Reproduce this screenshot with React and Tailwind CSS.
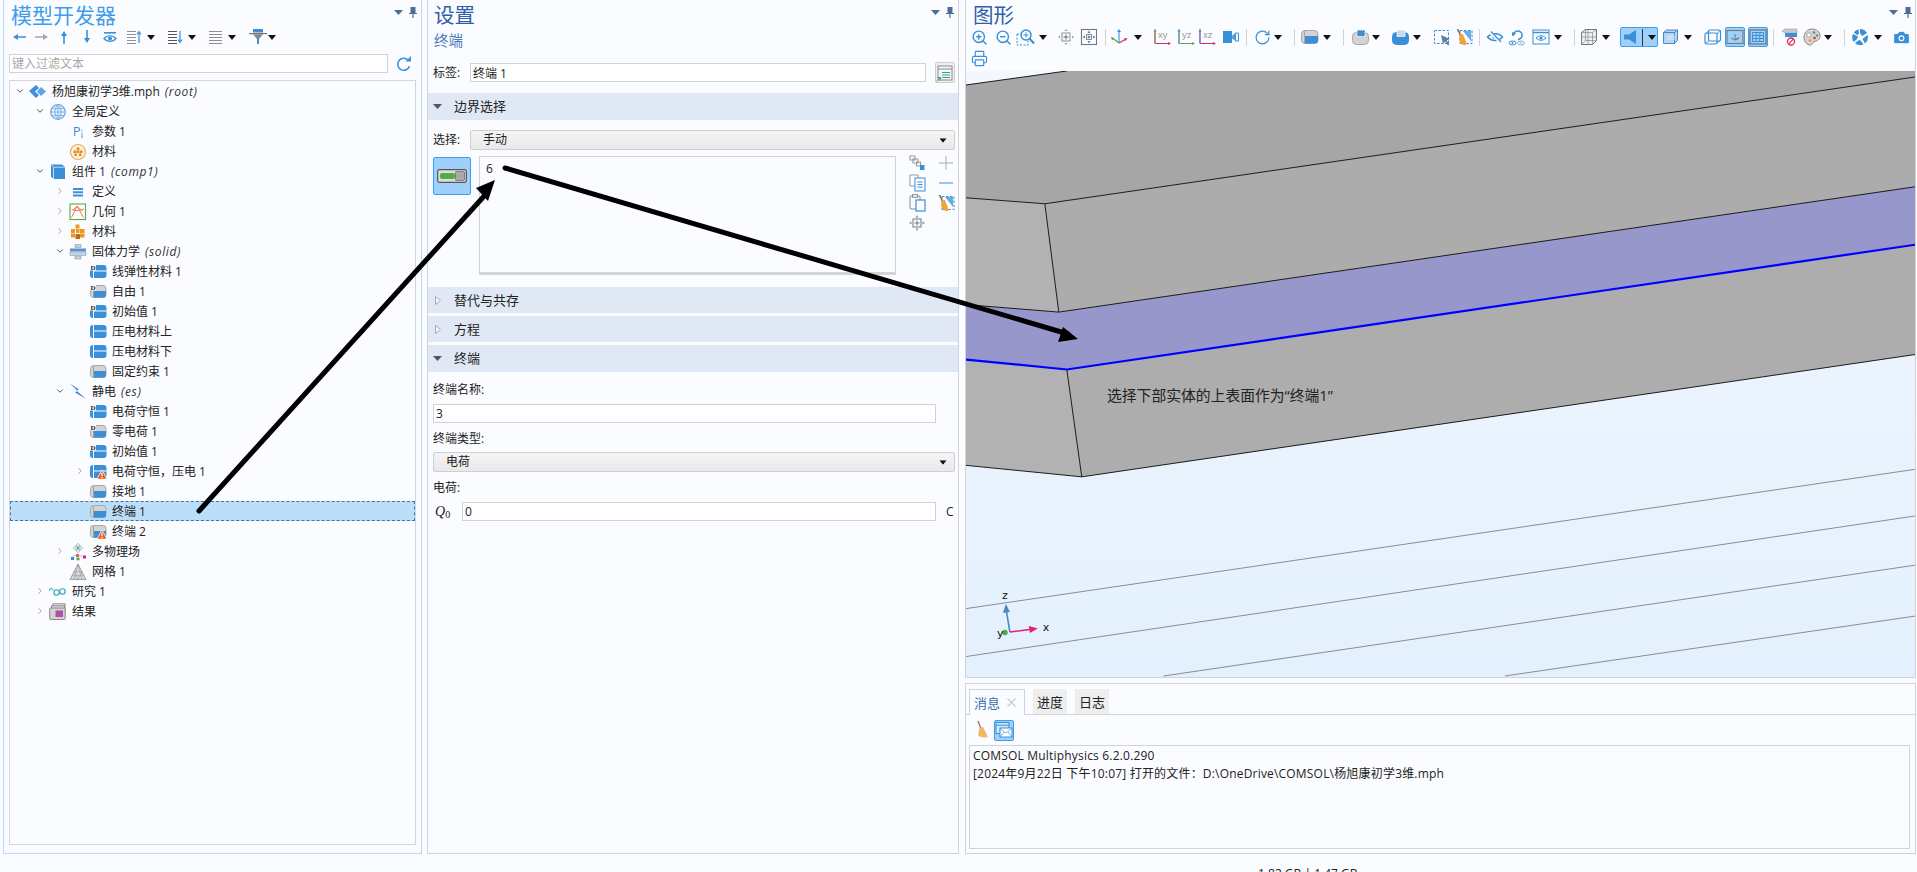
import { ZoomIn, ZoomOut, Printer, Camera, RotateCw, ChevronDown, ChevronRight } from "lucide-react";

const BL = "#3b8fd6";
const GR = "#8f8f8f";

// ---------- small helpers ----------
function T({ className = "", children }) {
  return <span className={"flex h-5 w-5 shrink-0 items-center justify-center " + className}>{children}</span>;
}

function Caret({ className = "" }) {
  return (
    <svg width="8" height="5" viewBox="0 0 8 5" className={"shrink-0 " + className}>
      <path d="M0 0H8L4 5Z" fill="#111" />
    </svg>
  );
}

function Sep({ className = "" }) {
  return <span className={"h-[17px] w-px shrink-0 bg-[#d0d4da] " + className} />;
}

function S({ children, w = 18, h = 18, vb = "0 0 18 18" }) {
  return (
    <svg width={w} height={h} viewBox={vb} fill="none">
      {children}
    </svg>
  );
}

function PanelPin() {
  return (
    <div className="absolute right-[4px] top-[7px] flex items-center gap-[6px]">
      <svg width="9" height="5" viewBox="0 0 9 5"><path d="M0 0H9L4.5 5Z" fill="#4a6f96" /></svg>
      <svg width="8" height="11" viewBox="0 0 8 11"><path d="M1.5 0H6.5V6H8V7H4.6V11H3.4V7H0V6H1.5Z" fill="#4a6f96" /></svg>
    </div>
  );
}

// ---------- tree icons ----------
const Warn = () => (
  <g>
    <path d="M7 15.2L12 5.8L17 15.2Z" fill="#f4581c" stroke="#fbfcff" strokeWidth="0.8" />
    <path d="M12 8.8V12M12 12.8V14" stroke="#fff" strokeWidth="1.2" />
  </g>
);

function Node({ kind = "bnd", d = false, warn = false }) {
  return (
    <svg width="17" height="15" viewBox="0 0 17 15" fill="none">
      {kind === "bnd" ? (
        <g>
          <rect x="0.5" y="1.5" width="15.5" height="12" rx="3" fill="#d3d3d3" stroke="#a8a8a8" />
          <path d="M3.5 7H16V11.5Q16 13.5 14 13.5H3.5Z" fill={BL} />
          <path d="M3.5 2V13" stroke="#a0a0a0" />
        </g>
      ) : (
        <g>
          <rect x="0" y="1" width="16.5" height="13" rx="3" fill={BL} />
          <path d="M3.5 1V14M3.5 7H16.5" stroke="#fff" strokeWidth="1" />
        </g>
      )}
      {d && (
        <g>
          <rect x="0" y="0" width="6" height="6.5" fill="#fbfcff" />
          <text x="0.5" y="6" fontSize="7" fontWeight="700" fontFamily="Liberation Serif" fill="#222">D</text>
        </g>
      )}
      {warn && <Warn />}
    </svg>
  );
}

const RootIcon = () => (
  <S>
    <path d="M0 8L7 2L10 5L6 8.5L10 12L7 15Z" fill="#3f8fd9" />
    <path d="M8 8.5L12 4L17 8.5L12 13Z" fill="#5aa6e8" />
  </S>
);
const Globe = () => (
  <S>
    <circle cx="9" cy="9" r="7.3" fill="#e3effa" stroke="#6fa9de" strokeWidth="1.2" />
    <path d="M1.7 9H16.3M2.8 5.4H15.2M2.8 12.6H15.2M9 1.7V16.3M9 1.7C5 5 5 13 9 16.3M9 1.7C13 5 13 13 9 16.3" stroke="#6fa9de" strokeWidth="0.8" />
  </S>
);
const Params = () => (
  <span className="text-[13px] leading-none text-[#3b8fd6]">
    P<span className="text-[10px]">¡</span>
  </span>
);
const MatRing = () => (
  <S>
    <circle cx="9" cy="9" r="7.5" fill="#fdf1e0" stroke="#eda848" strokeWidth="1.1" />
    <path d="M7.6 4.5h2.8v2.4H7.6zM4.5 7.4h2.6v2.6H4.5zM7.6 7.4h2.8v2.6H7.6zM10.9 7.4h2.6v2.6h-2.6zM5.5 10.5h2.4v2.4H5.5zM10 10.5h2.4v2.4H10z" fill="#dc8a25" />
  </S>
);
const Cube = () => (
  <S>
    <path d="M2 1.5H13L16 4V16H4.5L2 13.5Z" fill={BL} />
    <path d="M2 1.5L4.5 4.2H16M4.5 4.2V16" stroke="#bcdcf6" strokeWidth="1" />
  </S>
);
const Defs = () => (
  <S>
    <path d="M4 5h10v2H4zM4 8.2h10v2H4zM4 11.4h10v2H4z" fill={BL} />
  </S>
);
const Geom = () => (
  <S>
    <rect x="1" y="1" width="15.5" height="15.5" fill="#fff" stroke="#5aa845" strokeWidth="1.1" />
    <path d="M2.5 14.5L8 3L14.5 14.5M4 7L8 3L13.5 8M2.5 6.5C6 8 10 8 15 6" stroke="#ec6a4a" strokeWidth="0.9" />
  </S>
);
const Mat = () => (
  <S>
    <path d="M6.5 1.5h4v4h-4zM2 6h4v4H2zM7 6h3.5v4H7zM11 6h4.5v4H11zM2 10.5h4v4H2zM11 10.5h4.5v4H11z" fill="#f0951e" />
    <path d="M6.5 11h4.5v5H6.5z" fill="#b8691a" />
  </S>
);
const Solid = () => (
  <S>
    <path d="M6 1.5h6v3H6zM6 13h6v3H6z" fill="#c4d3e2" stroke="#8ba7c0" strokeWidth="0.7" />
    <path d="M1 5.5h16v3H1z" fill="#5c93cb" />
    <path d="M1 9h16v3.4H1z" fill="#c8d6e3" stroke="#8ba7c0" strokeWidth="0.7" />
  </S>
);
const Bolt = () => (
  <S>
    <path d="M1 0.5L10 6.5L7.5 7.5L17 16L6 9.5L8.5 8Z" fill="#4a90d5" />
  </S>
);
const Multi = () => (
  <S>
    <ellipse cx="9" cy="5" rx="4.5" ry="2" stroke="#7fb38a" strokeWidth="0.7" />
    <ellipse cx="9" cy="5" rx="2" ry="4.5" stroke="#7fa9c9" strokeWidth="0.7" />
    <circle cx="9" cy="5" r="1.2" fill="#6a9f7a" />
    <path d="M2 14h3v3H2z" fill="#3b8fd6" />
    <path d="M7 11h3v3H7z" fill="#e66060" />
    <path d="M7.5 14.5h3v2.8h-3z" fill="#5aa845" />
    <path d="M14 12.5h3v3h-3z" fill="#d91e8c" />
    <path d="M3.5 14L8.5 11M10 12.5L14.5 13.5" stroke="#999" strokeWidth="0.6" />
  </S>
);
const Mesh = () => (
  <S>
    <path d="M9 1L17 16.5H1Z" fill="#d8d8d8" stroke="#989898" strokeWidth="0.9" />
    <path d="M5 8.7H13M3 12.7H15M9 1L5 16.5M9 1L13 16.5M5 8.7L9 16.5L13 8.7" stroke="#989898" strokeWidth="0.6" />
  </S>
);
const Study = () => (
  <S>
    <path d="M0 8C1.5 4.5 3 5 4 7" stroke="#2ba4b5" strokeWidth="1.1" />
    <circle cx="7.5" cy="9.5" r="2.7" stroke="#2ba4b5" strokeWidth="1.1" />
    <circle cx="13.5" cy="8.5" r="2.7" stroke="#2ba4b5" strokeWidth="1.1" />
  </S>
);
const Results = () => (
  <S>
    <rect x="4" y="0.8" width="12" height="11" fill="#eee" stroke="#8a8a8a" />
    <rect x="2.5" y="2.8" width="13" height="11" fill="#e0e0e0" stroke="#8a8a8a" />
    <rect x="0.7" y="5" width="15.5" height="11.5" rx="1" fill="#d4d4d4" stroke="#8a8a8a" />
    <rect x="6.5" y="7.5" width="7.5" height="6.5" fill="#b050a0" />
  </S>
);

const rows = [
  { l: 0, open: true, icon: <RootIcon />, t: "杨旭康初学3维.mph", it: "(root)" },
  { l: 1, open: true, icon: <Globe />, t: "全局定义" },
  { l: 2, icon: <Params />, t: "参数 1" },
  { l: 2, icon: <MatRing />, t: "材料" },
  { l: 1, open: true, icon: <Cube />, t: "组件 1", it: "(comp1)" },
  { l: 2, closed: true, icon: <Defs />, t: "定义" },
  { l: 2, closed: true, icon: <Geom />, t: "几何 1" },
  { l: 2, closed: true, icon: <Mat />, t: "材料" },
  { l: 2, open: true, icon: <Solid />, t: "固体力学", it: "(solid)" },
  { l: 3, icon: <Node kind="dom" d />, t: "线弹性材料 1" },
  { l: 3, icon: <Node d />, t: "自由 1" },
  { l: 3, icon: <Node kind="dom" d />, t: "初始值 1" },
  { l: 3, icon: <Node kind="dom" />, t: "压电材料上" },
  { l: 3, icon: <Node kind="dom" />, t: "压电材料下" },
  { l: 3, icon: <Node />, t: "固定约束 1" },
  { l: 2, open: true, icon: <Bolt />, t: "静电", it: "(es)" },
  { l: 3, icon: <Node kind="dom" d />, t: "电荷守恒 1" },
  { l: 3, icon: <Node d />, t: "零电荷 1" },
  { l: 3, icon: <Node kind="dom" d />, t: "初始值 1" },
  { l: 3, closed: true, icon: <Node kind="dom" warn />, t: "电荷守恒，压电 1" },
  { l: 3, icon: <Node />, t: "接地 1" },
  { l: 3, sel: true, icon: <Node />, t: "终端 1" },
  { l: 3, icon: <Node warn />, t: "终端 2" },
  { l: 2, closed: true, icon: <Multi />, t: "多物理场" },
  { l: 2, icon: <Mesh />, t: "网格 1" },
  { l: 1, closed: true, icon: <Study />, t: "研究 1" },
  { l: 1, closed: true, icon: <Results />, t: "结果" },
];
const indent = ["pl-[4px]", "pl-[24px]", "pl-[44px]", "pl-[64px]"];

function TreeRow({ r }) {
  return (
    <div
      className={
        "flex h-[20px] items-center border border-transparent whitespace-nowrap " +
        indent[r.l] +
        (r.sel ? " border-dashed !border-[#47749f] bg-[#bbdefb]" : "")
      }
    >
      <span className="flex w-[10px] justify-center text-[#333]">
        {r.open && <ChevronDown size={14} strokeWidth={2} />}
        {r.closed && <ChevronRight size={14} strokeWidth={1.4} className="text-[#666]" />}
      </span>
      <span className="ml-[3px] mt-[1px] flex w-[20px] justify-center">{r.icon}</span>
      <span className="ml-[4px] mt-[2px] text-[#222]">{r.t}</span>
      {r.it && <span className="ml-[5px] mt-[2px] italic tracking-[0.6px] text-[#333]">{r.it}</span>}
    </div>
  );
}

// ---------- left toolbar icons ----------
const Arrow = ({ rot = "", color = BL }) => (
  <S w={16} h={16} vb="0 0 16 16">
    <g className={rot} style={{ transformOrigin: "8px 8px" }}>
      <path d="M2 8L7 5V7.2H15V8.8H7V11Z" fill={color} />
    </g>
  </S>
);
const EyeBar = () => (
  <S>
    <path d="M3 4h12v1.6H3z" fill={BL} />
    <path d="M3 10.5C6 6.8 12 6.8 15 10.5C12 14.2 6 14.2 3 10.5Z" stroke={BL} strokeWidth="1.2" />
    <circle cx="9" cy="10.5" r="2" fill={BL} />
  </S>
);
const ListIcon = ({ dir }) => (
  <S>
    <path d="M3 3.5H12M3 6.5H12M3 9.5H12M3 12.5H12M3 15.5H12" stroke={dir === "down" ? "#555" : GR} strokeWidth="1.1" />
    {dir === "up" && <path d="M15 15V5M13 6.5L15 3.5L17 6.5" stroke={BL} strokeWidth="1.2" />}
    {dir === "down" && <path d="M15 3V13M13 11.5L15 14.5L17 11.5" stroke={BL} strokeWidth="1.2" />}
    {!dir && <path d="M12 3.5H16M12 6.5H16M12 9.5H16M12 12.5H16M12 15.5H16" stroke={GR} strokeWidth="1.1" />}
  </S>
);
const Funnel = () => (
  <S w={20} h={18} vb="0 0 20 18">
    <path d="M5 1h10v3.5H5z" fill={BL} />
    <path d="M1 5h18v1.2H1z" fill="#777" />
    <path d="M5 6.2H15L11 11H9Z" fill="#888" />
    <path d="M9 11h2v5H9z" fill={BL} />
  </S>
);
const Refresh = () => (
  <S>
    <path d="M14.5 11A6 6 0 1 1 13 5" stroke={BL} strokeWidth="1.5" />
    <path d="M10.5 6.5H16V1Z" fill={BL} />
  </S>
);

// ---------- graphics toolbar icons ----------
const Center = () => (
  <S>
    <rect x="5" y="5" width="8" height="8" stroke={GR} />
    <path d="M9 6.5V11.5M6.5 9H11.5" stroke="#666" />
    <path d="M9 1L7.5 3H10.5ZM9 17L7.5 15H10.5ZM1 9L3 7.5V10.5ZM17 9L15 7.5V10.5Z" fill="#6ea9dd" />
  </S>
);
const Fit = () => (
  <S>
    <rect x="1.5" y="1.5" width="15" height="15" stroke="#777" strokeWidth="1.1" />
    <rect x="6.5" y="6.5" width="5" height="5" stroke={GR} />
    <path d="M9 7.5V10.5M7.5 9H10.5" stroke="#666" />
    <path d="M9 2.5L7.5 5H10.5ZM9 15.5L7.5 13H10.5ZM2.5 9L5 7.5V10.5ZM15.5 9L13 7.5V10.5Z" fill={BL} />
  </S>
);
const ZoomBox = () => (
  <S w={20} h={18} vb="0 0 20 18">
    <rect x="1" y="6" width="11" height="11" stroke={BL} strokeDasharray="2 1.5" />
    <circle cx="10" cy="7" r="5" stroke={BL} strokeWidth="1.5" fill="#fafcff" />
    <path d="M10 4.5V9.5M7.5 7H12.5" stroke={BL} />
    <path d="M13.5 10.5L18 15.5" stroke={BL} strokeWidth="2" />
  </S>
);
const Axes = () => (
  <S>
    <path d="M9 15V3" stroke={BL} strokeWidth="1.1" />
    <path d="M9 1L7 4H11Z" fill={BL} />
    <path d="M9 15L16 11" stroke="#d9286c" strokeWidth="1.2" />
    <path d="M17.5 10L14 10.5L15.6 13Z" fill="#d9286c" />
    <path d="M9 15L2.5 10" stroke="#56a845" strokeWidth="1.2" />
    <path d="M1 9L2 12.5L4.4 10Z" fill="#56a845" />
  </S>
);
const Plane = ({ t, v, h }) => (
  <svg width="20" height="18" viewBox="0 0 20 18" fill="none">
    <path d="M3 3V15.5H17" stroke={h} strokeWidth="1" />
    <path d="M3 15.5V3" stroke={v} strokeWidth="1" />
    <path d="M3 0.5L1.5 3.5H4.5Z" fill={v} />
    <path d="M19 15.5L16 14V17Z" fill={h} />
    <text x="6" y="10" fontSize="9.5" fill="#9a9a9a" fontFamily="Liberation Sans">{t}</text>
  </svg>
);
const CamBlock = () => (
  <S w={16} h={14} vb="0 0 16 14">
    <path d="M0 1h9v12H0z" fill={BL} />
    <path d="M9 5.5L12 3.5V10.5L9 8.5Z" fill="#5aa0e0" />
    <path d="M12.5 3h3v8h-3z" stroke={BL} />
  </S>
);
const Cyl = () => (
  <S w={18} h={14} vb="0 0 18 14">
    <rect x="0.5" y="0.5" width="16.5" height="13" rx="3.5" fill="#d3d3d3" stroke="#a8a8a8" />
    <path d="M3.5 6H17V10.5Q17 13.5 14 13.5H3.5Z" fill={BL} />
    <path d="M3.5 1V13" stroke="#a8a8a8" />
  </S>
);
const BoxSel = ({ fill }) => (
  <S w={18} h={16} vb="0 0 18 16">
    <rect x="0.5" y="3.5" width="16" height="12" rx="4" fill={fill} stroke={fill === BL ? BL : "#a8a8a8"} />
    <rect x="5" y="1" width="8" height="6.5" fill={fill === BL ? "#c9d9e8" : BL} stroke={fill === BL ? "#fff" : "#fff"} strokeDasharray="1.5 1" />
  </S>
);
const CursorBox = () => (
  <S>
    <rect x="1.5" y="2.5" width="14" height="13" stroke={BL} strokeDasharray="2.5 1.5" />
    <path d="M8 7L17 11L13.5 12.5L16.5 16.5L15 17.5L12 13.5L10 16Z" fill="#5d7f9f" />
  </S>
);
const BroomBox = () => (
  <S>
    <rect x="5" y="2.5" width="12" height="13" stroke={BL} strokeDasharray="2.5 1.5" />
    <path d="M8 3H16V13Z" fill="#3b8fd6" opacity="0.75" />
    <path d="M2.5 1L5.5 7" stroke="#7a5a3a" strokeWidth="1.4" />
    <path d="M4 6.5L8 6L12 16.5C9 17.5 6.5 17 5 15Z" fill="#f2a23c" />
  </S>
);
const HideEye = () => (
  <S>
    <path d="M1.5 9C5 4.5 13 4.5 16.5 9C13 13.5 5 13.5 1.5 9Z" stroke={BL} strokeWidth="1.5" />
    <circle cx="8" cy="9" r="1.8" fill={BL} />
    <path d="M3 3L15 15" stroke="#fafcff" strokeWidth="3" />
    <path d="M5 3.5L15 14" stroke={BL} strokeWidth="1.2" />
  </S>
);
const ResetView = () => (
  <S>
    <path d="M5.5 7.5A4.3 4.3 0 1 1 10 11.5" stroke={BL} strokeWidth="1.5" />
    <path d="M3 7H8L5.5 3.5Z" fill={BL} transform="rotate(-35 5.5 6)" />
    <ellipse cx="4.5" cy="15" rx="3.5" ry="2" stroke={BL} />
    <circle cx="4.5" cy="15" r="1" fill={BL} />
    <ellipse cx="13" cy="15" rx="3.5" ry="2" stroke="#8ab7e0" />
    <path d="M10.5 13L15.5 17" stroke="#8ab7e0" />
  </S>
);
const WinEye = () => (
  <S>
    <rect x="1" y="2" width="16" height="14" stroke={BL} />
    <path d="M1 4.5H17" stroke={BL} strokeWidth="1.4" />
    <path d="M4 10C7 7 11 7 14 10C11 13 7 13 4 10Z" stroke={BL} />
    <circle cx="9" cy="10" r="1.6" fill={BL} />
  </S>
);
const Wire = () => (
  <S>
    <path d="M1.5 4.5L5.5 1.5H16.5V12.5L12.5 16.5H1.5Z" stroke="#777" fill="#eceff3" />
    <path d="M1.5 4.5H12.5V16.5M12.5 4.5L16.5 1.5M5.5 1.5V12.5H16.5M5.5 12.5L1.5 16.5M8 1.5V16M1.5 9H16.5" stroke="#8a8a8a" strokeWidth="0.7" />
  </S>
);
const Horn = () => (
  <S w={16} h={14} vb="0 0 16 14">
    <path d="M0 4.5H5L12 0V14L5 9.5H0Z" fill={BL} />
  </S>
);
const BoxSolid = () => (
  <S>
    <path d="M1.5 4.5L4.5 2H15.5V12.5L12.5 15.5H1.5Z" fill="#b9d3ec" stroke={BL} />
    <path d="M1.5 4.5H12.5V15.5M12.5 4.5L15.5 2" stroke={BL} />
    <path d="M5 7H12.5V12H5Z" fill="#cbdff2" />
  </S>
);
const FrameBox = () => (
  <S>
    <rect x="1" y="5" width="12" height="11" rx="1.5" stroke={BL} strokeWidth="1.2" />
    <rect x="4.5" y="2" width="12" height="11" rx="1.5" stroke={BL} strokeWidth="1.2" />
    <path d="M1.5 6L5 2.5M13 6L16 2.5M13 15.5L16 12.5M1.5 15.5L5 12.5" stroke={BL} />
  </S>
);
const FrameAxes = () => (
  <S>
    <rect x="1" y="2.5" width="16" height="13" stroke="#777" strokeWidth="1.1" />
    <path d="M9 6V12" stroke={BL} strokeWidth="1.1" />
    <path d="M9 12L13 10" stroke="#d9286c" strokeWidth="1.1" />
    <path d="M9 12L5 10" stroke="#56a845" strokeWidth="1.1" />
  </S>
);
const GridBox = () => (
  <S>
    <rect x="1" y="2" width="16" height="14" stroke="#666" strokeWidth="1.1" />
    <path d="M3.5 4.5H14.5V13.5H3.5ZM3.5 7.5H14.5M3.5 10.5H14.5M7.2 4.5V13.5M10.8 4.5V13.5" stroke={BL} />
  </S>
);
const NoSurface = () => (
  <S>
    <path d="M1 3L4 1H16V5H4Z" fill="#c9c9c9" stroke="#a8a8a8" strokeWidth="0.7" />
    <path d="M4 5H16V9H4Z" fill={BL} />
    <circle cx="10" cy="13.5" r="3.5" fill="#fff" stroke="#e02860" strokeWidth="1.3" />
    <path d="M7.8 15.8L12.2 11.2" stroke="#e02860" strokeWidth="1.2" />
  </S>
);
const Palette = () => (
  <S>
    <path d="M9 1C4 1 1 5 1 9.5C1 14 4 17 7.5 17C10 17 9.5 14 11 13.5C14 13 17 12 17 7.5C17 4 13.5 1 9 1Z" fill="#d8d4d0" stroke="#8a8a8a" />
    <circle cx="6" cy="7" r="2.2" fill="#fafcff" stroke="#8a8a8a" strokeWidth="0.7" />
    <circle cx="11" cy="4.5" r="1.3" fill={BL} />
    <circle cx="14" cy="7.5" r="1.3" fill="#56a845" />
    <circle cx="11.5" cy="10" r="1.3" fill="#e02860" />
    <circle cx="7" cy="12.5" r="1.3" fill="#f0951e" />
  </S>
);
const Shutter = () => (
  <S>
    <circle cx="9" cy="9" r="5" stroke="#fafcff" />
    <path d="M9 1A8 8 0 0 1 16 5L11 8L9 5ZM16.5 7A8 8 0 0 1 14 15.5L11.5 11L14 9ZM12.5 16.5A8 8 0 0 1 4 15L8 12L10 13ZM2.7 14A8 8 0 0 1 2 6L7 8.5L6 11ZM2.8 4.5A8 8 0 0 1 7.5 1.2L8 6L6 7Z" fill={BL} />
  </S>
);

// ---------- settings side icons ----------
const LabelBtn = () => (
  <S>
    <rect x="2" y="2" width="14" height="14" fill="#f6f6f6" stroke="#8a8a8a" />
    <path d="M2 5H16" stroke="#8a8a8a" />
    <path d="M6 8.5H14M6 11H14M6 13.5H14" stroke="#2ba58a" />
    <path d="M0.5 17.5L4 14M1.5 13.5H4.5V16.5" stroke="#2ba58a" />
  </S>
);
const Toggle = () => (
  <svg width="30" height="14" viewBox="0 0 30 14" fill="none">
    <rect x="0.7" y="0.7" width="28.6" height="12.6" rx="1.5" fill="#dedede" stroke="#555" strokeWidth="1.2" />
    <rect x="3" y="4" width="15" height="6" rx="2" fill="#56ad48" />
    <rect x="18.5" y="2.5" width="9" height="9" rx="1" fill="#a8a8a8" stroke="#666" strokeWidth="0.7" />
  </svg>
);
const Link = () => (
  <S w={16} h={16} vb="0 0 16 16">
    <path d="M1 1h5v4H1zM4 4h5v4H4zM7.5 7h4v4h-4z" stroke="#9c9c9c" strokeWidth="1.1" />
    <path d="M11 10h4.5v5H11z" fill={BL} />
  </S>
);
const CopyI = () => (
  <S w={17} h={18} vb="0 0 17 18">
    <path d="M1 1H9V12H1Z" stroke="#999" fill="#fafcff" />
    <rect x="6" y="4" width="10" height="13" stroke={BL} fill="#fafcff" />
    <path d="M8.5 8H13.5M8.5 10.5H13.5M8.5 13H13.5" stroke={BL} />
  </S>
);
const PasteI = () => (
  <S w={17} h={18} vb="0 0 17 18">
    <rect x="1" y="2" width="10" height="13" rx="1" stroke="#888" />
    <rect x="3.5" y="0.7" width="5" height="2.6" fill="#fafcff" stroke="#888" />
    <rect x="7" y="6" width="9" height="11" fill="#fafcff" stroke={BL} strokeWidth="1.2" />
  </S>
);
const ZoomSel = () => (
  <S w={16} h={16} vb="0 0 16 16">
    <rect x="4" y="4" width="8" height="8" stroke="#777" />
    <path d="M8 5.5V10.5M5.5 8H10.5" stroke="#777" />
    <path d="M8 0L6.5 2.5H9.5ZM8 16L6.5 13.5H9.5ZM0 8L2.5 6.5V9.5ZM16 8L13.5 6.5V9.5Z" fill="#5d9ed9" />
  </S>
);
const Broom = () => (
  <S w={14} h={20} vb="0 0 14 20">
    <path d="M3 1L6 9" stroke="#8a6a48" strokeWidth="1.2" />
    <path d="M4.5 8L8 7L13 17C9 18 5 17.5 3 15Z" fill="#f3b566" />
  </S>
);
const MailWin = () => (
  <S>
    <rect x="1" y="1.5" width="13" height="11" fill="#d5e7f8" stroke={BL} />
    <path d="M1 4.2H14" stroke={BL} />
    <rect x="5" y="7" width="12" height="9" fill="#fff" stroke={BL} />
    <path d="M5 7.5L11 12L17 7.5M5 16L9 11M17 16L13 11" stroke={BL} strokeWidth="0.7" />
  </S>
);

function Section({ title, open, className = "" }) {
  return (
    <div className={"flex items-center bg-[#dfe8f4] text-[13px] text-[#222] " + className}>
      <span className="ml-[5px] flex w-[9px] justify-center">
        {open ? (
          <svg width="9" height="5" viewBox="0 0 9 5"><path d="M0 0H9L4.5 5Z" fill="#555" /></svg>
        ) : (
          <svg width="6" height="9" viewBox="0 0 6 9"><path d="M0.5 0.5L5.5 4.5L0.5 8.5Z" fill="#f6f8fc" stroke="#a8a8a8" /></svg>
        )}
      </span>
      <span className="mb-[1px] ml-[12px]">{title}</span>
    </div>
  );
}

const inputCls = "border border-[#cfd2d6] bg-white px-[2px] text-[12px] text-[#222] outline-none";

function Select({ text, className = "" }) {
  return (
    <div className={"flex h-[20px] items-center justify-between rounded-[2px] border border-[#cfcfcf] bg-linear-to-b from-[#f5f5f5] to-[#e9e9e9] pl-[12px] pr-[7px] " + className}>
      <span>{text}</span>
      <Caret className="scale-90" />
    </div>
  );
}

// ---------- canvas drawing ----------
function Canvas() {
  return (
    <div className="relative h-[607px] border-b border-l border-r border-[#d0d4da]">
      <svg className="block h-full w-full" viewBox="966 71 951 607" preserveAspectRatio="none">
        <defs>
          <linearGradient id="bg" x1="0" y1="0" x2="0" y2="1">
            <stop offset="0" stopColor="#f3f8ff" />
            <stop offset="1" stopColor="#e3f0fd" />
          </linearGradient>
        </defs>
        <rect x="966" y="71" width="951" height="607" fill="url(#bg)" />
        {/* ground lines */}
        <g stroke="#8a8d90" strokeWidth="1">
          <path d="M966 609.5L1917 470" />
          <path d="M966 657.5L1917 516.7" />
          <path d="M1164 677L1917 566" />
          <path d="M1506 677L1917 617" />
        </g>
        {/* top face */}
        <path d="M966 85L1067 71H1917V77L1045 204L966 198Z" fill="#a6a6a6" />
        {/* upper block */}
        <path d="M1045 204L1917 77V187L1059 312.5Z" fill="#acacac" />
        <path d="M966 198L1045 204L1059 312.5L966 305Z" fill="#b2b2b2" />
        {/* selected boundary */}
        <path d="M966 305L1059 312.5L1917 187V245L1067 370L966 360Z" fill="#9797cb" />
        {/* lower block */}
        <path d="M1067 370L1917 245V355L1082 477.5Z" fill="#adadad" />
        <path d="M966 360L1067 370L1082 477.5L966 466Z" fill="#b2b2b2" />
        <g stroke="#1a1a1a" strokeWidth="1" fill="none">
          <path d="M966 85L1067 71" />
          <path d="M966 198L1045 204L1917 77" />
          <path d="M1045 204L1059 312.5" />
          <path d="M966 305L1059 312.5L1917 187" />
          <path d="M1067 370L1082 477.5" />
          <path d="M966 466L1082 477.5L1917 355" />
        </g>
        <path d="M966 360L1067 370L1917 245" stroke="#0000ff" strokeWidth="2.2" fill="none" />
        {/* coordinate axes */}
        <path d="M1010 633L1006.5 612" stroke="#4a86c0" strokeWidth="1.6" />
        <path d="M1006 605L1003 614L1010 613Z" fill="#4a86c0" />
        <path d="M1010 633L1030 630.5" stroke="#e0246a" strokeWidth="1.6" />
        <path d="M1038 629.5L1029 627L1030 634Z" fill="#e0246a" />
        <circle cx="1005" cy="633.5" r="2.8" fill="#4fa84a" />
        <g fontFamily="DejaVu Sans" fontSize="11" fill="#111">
          <text x="1002" y="600">z</text>
          <text x="1043" y="632">x</text>
          <text x="997" y="638">y</text>
        </g>
      </svg>
      <span className="absolute left-[141px] top-[314px] text-[14.8px] leading-[20px] whitespace-nowrap text-[#222]">
        选择下部实体的上表面作为“终端1”
      </span>
    </div>
  );
}

export default function App() {
  return (
    <div className="relative h-[872px] w-[1917px] overflow-hidden bg-[#fafcff] text-[12px] leading-[16px] text-[#222] [font-family:'Open_Sans','Noto_Sans_CJK_SC',sans-serif]">
      <div className="flex h-[854px]">
        {/* model builder */}
        <div className="relative ml-[3px] flex w-[419px] shrink-0 flex-col border-x border-b border-[#bcd9f7]">
          <div className="h-[27px] pl-[7px] text-[21px] leading-[30px] text-[#3f9ce8]">模型开发器</div>
          <PanelPin />
          <div className="flex h-[20px] items-center">
            <T className="ml-[5px]"><Arrow /></T>
            <T className="ml-[3px]"><Arrow rot="rotate-180" color="#a8a8a8" /></T>
            <T className="ml-[2px]"><Arrow rot="rotate-90" /></T>
            <T className="ml-[3px]"><Arrow rot="-rotate-90" /></T>
            <T className="ml-[3px]"><EyeBar /></T>
            <T className="ml-[3px]"><ListIcon dir="up" /></T>
            <Caret className="ml-[4px]" />
            <T className="ml-[9px]"><ListIcon dir="down" /></T>
            <Caret className="ml-[4px]" />
            <T className="ml-[9px]"><ListIcon /></T>
            <Caret className="ml-[3px]" />
            <T className="ml-[12px]"><Funnel /></T>
            <Caret className="ml-0" />
          </div>
          <div className="mt-[7px] flex h-[19px] items-center pl-[5px]">
            <input readOnly placeholder="键入过滤文本" className="h-[19px] w-[379px] border border-[#cfd2d6] bg-white px-[2px] text-[12px] outline-none placeholder:text-[#a8a8a8]" />
            <span className="ml-[7px]"><Refresh /></span>
          </div>
          <div className="mx-[5px] mt-[7px] h-[765px] w-[407px] border border-[#d3d6da] bg-[#fbfcff]">
            {rows.map((r, i) => <TreeRow key={i} r={r} />)}
          </div>
        </div>

        {/* settings */}
        <div className="relative ml-[5px] flex w-[532px] shrink-0 flex-col border-x border-b border-[#d0d4da]">
          <div className="h-[29px] pl-[6px] text-[20.5px] leading-[30px] text-[#2f5fa8]">设置</div>
          <PanelPin />
          <div className="h-[24px] pl-[6px] text-[14.5px] leading-[24px] text-[#4f79b8]">终端</div>

          <div className="mt-[9px] flex h-[21px] items-center pl-[5px]">
            <span className="w-[37px]">标签:</span>
            <input readOnly value="终端 1" className={inputCls + " h-[19px] w-[456px]"} />
            <span className="ml-[9px] flex h-[21px] w-[20px] items-center justify-center rounded-[2px] border border-[#cfcfcf] bg-[#efefef]"><LabelBtn /></span>
          </div>

          <Section open title="边界选择" className="mt-[10px] h-[27px]" />

          <div className="mt-[10px] flex items-center pl-[5px]">
            <span className="w-[37px]">选择:</span>
            <Select text="手动" className="w-[485px]" />
          </div>

          <div className="mt-[6px] flex h-[119px] items-start pl-[5px]">
            <span className="mt-[1px] flex h-[38px] w-[38px] items-center justify-center rounded-[2px] border border-[#3b9eef] bg-[#9fd0f9]"><Toggle /></span>
            <div className="ml-[8px] h-[119px] w-[417px] border border-b-[3px] border-[#d0d3d6] border-b-[#d4d4d4] pl-[6px] pt-[3px] text-[12px] leading-[18px]">6</div>
            <div className="-mt-[3px] ml-[11px] grid grid-cols-[20px_20px] gap-x-[9px] auto-rows-[20px] place-items-center">
              <Link />
              <svg width="14" height="14" viewBox="0 0 14 14"><path d="M7 0V14M0 7H14" stroke="#a8a8a8" strokeWidth="1" /></svg>
              <CopyI />
              <svg width="14" height="2" viewBox="0 0 14 2"><path d="M0 1H14" stroke="#5d9ed9" strokeWidth="1.2" /></svg>
              <PasteI />
              <BroomBox />
              <ZoomSel />
            </div>
          </div>

          <Section title="替代与共存" className="mt-[12px] h-[26px]" />
          <Section title="方程" className="mt-[3px] h-[26px]" />
          <Section open title="终端" className="mt-[3px] h-[27px]" />

          <div className="mt-[10px] pl-[5px]">终端名称:</div>
          <input readOnly value="3" className={inputCls + " ml-[5px] mt-[6px] h-[19px] w-[503px]"} />
          <div className="mt-[8px] pl-[5px]">终端类型:</div>
          <Select text="电荷" className="ml-[5px] mt-[5px] w-[522px]" />
          <div className="mt-[8px] pl-[5px]">电荷:</div>
          <div className="mt-[6px] flex h-[19px] items-center pl-[7px]">
            <span className="w-[27px] text-[14px] italic leading-none [font-family:'Liberation_Serif',serif]">
              Q<sub className="text-[10px] not-italic">0</sub>
            </span>
            <input readOnly value="0" className={inputCls + " h-[19px] w-[474px]"} />
            <span className="ml-[10px]">C</span>
          </div>
        </div>

        {/* graphics + messages */}
        <div className="relative ml-[6px] flex w-[951px] shrink-0 flex-col">
          <div className="h-[71px] border-l border-r border-[#d0d4da]">
            <div className="h-[27px] pl-[7px] text-[20.5px] leading-[30px] text-[#2f5fa8]">图形</div>
            <PanelPin />
            <div className="flex h-[20px] items-center">
              <T className="ml-[3px]"><ZoomIn size={17} color={BL} strokeWidth={2} /></T>
              <T className="ml-[4px]"><ZoomOut size={17} color={BL} strokeWidth={2} /></T>
              <T className="ml-[3px]"><ZoomBox /></T>
              <Caret className="ml-[3px]" />
              <T className="ml-[9px]"><Center /></T>
              <T className="ml-[3px]"><Fit /></T>
              <Sep className="ml-[6px]" />
              <T className="ml-[3px]"><Axes /></T>
              <Caret className="ml-[5px]" />
              <T className="ml-[10px]"><Plane t="xy" v="#56a845" h="#d9286c" /></T>
              <T className="ml-[4px]"><Plane t="yz" v={BL} h="#56a845" /></T>
              <T className="ml-[1px]"><Plane t="xz" v={BL} h="#d9286c" /></T>
              <T className="ml-[4px]"><CamBlock /></T>
              <Sep className="ml-[5px]" />
              <T className="ml-[5px]"><RotateCw size={17} color={BL} strokeWidth={1.7} /></T>
              <Caret className="ml-[2px]" />
              <Sep className="ml-[12px]" />
              <T className="ml-[5px]"><Cyl /></T>
              <Caret className="ml-[3px]" />
              <Sep className="ml-[12px]" />
              <T className="ml-[7px]"><BoxSel fill="#d3d3d3" /></T>
              <Caret className="ml-[1px]" />
              <T className="ml-[11px]"><BoxSel fill={BL} /></T>
              <Caret className="ml-[2px]" />
              <T className="ml-[11px]"><CursorBox /></T>
              <T className="ml-[2px]"><BroomBox /></T>
              <Sep className="ml-[5px]" />
              <T className="ml-[5px]"><HideEye /></T>
              <T className="ml-[2px]"><ResetView /></T>
              <T className="ml-[4px]"><WinEye /></T>
              <Caret className="ml-[3px]" />
              <Sep className="ml-[12px]" />
              <T className="ml-[4px]"><Wire /></T>
              <Caret className="ml-[3px]" />
              <span className="ml-[10px] flex h-[20px] w-[38px] shrink-0 items-center rounded-[2px] border border-[#3b9eef] bg-[#9fd0f9] pl-[3px]">
                <Horn />
                <span className="ml-[2px] h-[17px] w-px bg-[#333]" />
                <Caret className="ml-[5px]" />
              </span>
              <T className="ml-[3px]"><BoxSolid /></T>
              <Caret className="ml-[3px]" />
              <T className="ml-[11px]"><FrameBox /></T>
              <span className="ml-[2px] flex h-[20px] w-[20px] shrink-0 items-center justify-center rounded-[2px] border border-[#3b9eef] bg-[#9fd0f9]"><FrameAxes /></span>
              <span className="ml-[3px] flex h-[20px] w-[20px] shrink-0 items-center justify-center rounded-[2px] border border-[#3b9eef] bg-[#9fd0f9]"><GridBox /></span>
              <Sep className="ml-[5px]" />
              <T className="ml-[6px]"><NoSurface /></T>
              <T className="ml-[2px]"><Palette /></T>
              <Caret className="ml-[2px]" />
              <Sep className="ml-[12px]" />
              <T className="ml-[5px]"><Shutter /></T>
              <Caret className="ml-[4px]" />
              <T className="ml-[9px]"><Camera size={19} fill={BL} color="#fafcff" strokeWidth={1.4} /></T>
            </div>
            <div className="mt-[1px] flex h-[20px] items-center">
              <T className="ml-[3px]"><Printer size={17} color={BL} strokeWidth={1.6} /></T>
            </div>
          </div>

          <Canvas />

          <div className="mt-[5px] flex h-[171px] flex-col border border-[#d0d4da]">
            <div className="flex h-[31px] items-end border-b border-[#d0d4da] pl-[3px] text-[13px]">
              <div className="-mb-px flex h-[26px] w-[56px] items-center border border-b-0 border-[#d0d4da] bg-[#fafcff] pl-[4px] text-[#3b6cb0]">
                消息
                <svg className="ml-[7px]" width="9" height="9" viewBox="0 0 9 9"><path d="M0.5 0.5L8.5 8.5M8.5 0.5L0.5 8.5" stroke="#c4cad0" strokeWidth="1.1" /></svg>
              </div>
              <div className="ml-[8px] flex h-[25px] w-[34px] items-center justify-center bg-[#eeeeee]">进度</div>
              <div className="ml-[8px] flex h-[25px] w-[34px] items-center justify-center bg-[#eeeeee]">日志</div>
            </div>
            <div className="flex h-[30px] items-center pl-[9px]">
              <Broom />
              <span className="ml-[5px] flex h-[21px] w-[20px] items-center justify-center rounded-[2px] border border-[#3b9eef] bg-[#9fd0f9]"><MailWin /></span>
            </div>
            <div className="ml-[3px] mr-[5px] h-[104px] border border-[#d0d4da] pl-[3px] pt-[1px] leading-[18px] tracking-[0.19px] whitespace-pre">
              <div>COMSOL Multiphysics 6.2.0.290</div>
              <div>{"[2024年9月22日 下午10:07] 打开的文件：D:\\OneDrive\\COMSOL\\杨旭康初学3维.mph"}</div>
            </div>
          </div>
        </div>
      </div>

      <div className="pl-[1258px] pt-[12px] whitespace-nowrap">1.82 GB | 1.47 GB</div>

      {/* annotation arrows drawn over the window */}
      <svg className="pointer-events-none absolute left-0 top-0" width="1917" height="872" viewBox="0 0 1917 872">
        <path d="M199 511L486 194" stroke="#000" strokeWidth="5" strokeLinecap="round" />
        <path d="M495 180L476 188L488 201Z" fill="#000" />
        <path d="M505 168L1068 334" stroke="#000" strokeWidth="5" strokeLinecap="round" />
        <path d="M1078 339L1063 327L1058 342Z" fill="#000" />
      </svg>
    </div>
  );
}
